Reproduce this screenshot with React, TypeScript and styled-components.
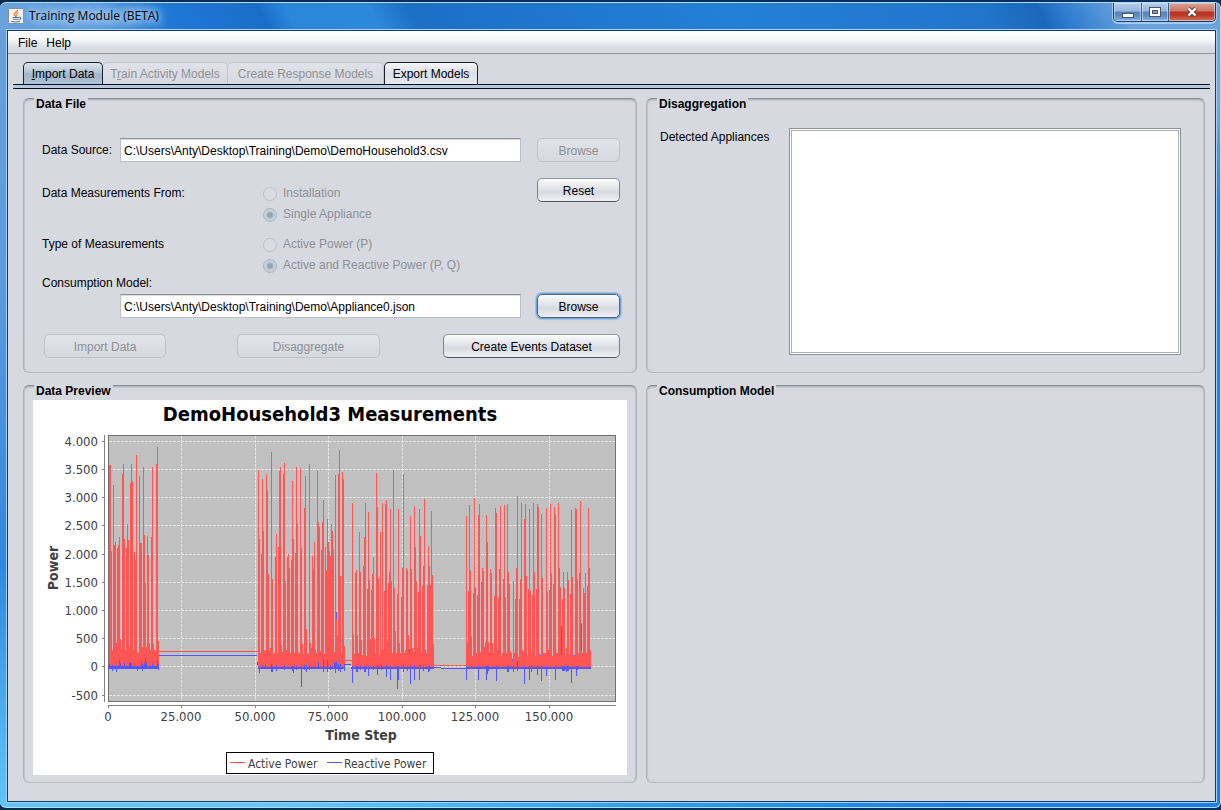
import React from "react";
import styled, { createGlobalStyle, css } from "styled-components";

const GlobalStyle = createGlobalStyle`
  *, *::before, *::after { box-sizing: border-box; }
  html, body { margin: 0; padding: 0; background: #04305f; }
  body, button, input, select {
    font-family: "Liberation Sans", Arial, sans-serif;
    font-size: 12px;
    line-height: 14px;
    color: #000;
  }
`;

const PANEL_BG = "#d6d9e0";
const MUTED = "#8e9095";

const Desktop = styled.div`
  min-height: 100vh;
  display: flex;
  padding: 2px 0 3px;
  background: linear-gradient(90deg, #0b2c4c, #04305f);
`;

const WindowFrame = styled.div`
  flex: 1;
  display: flex;
  flex-direction: column;
  padding: 0 4px 5px 7px;
  border: 1px solid #b5dcf8;
  border-left-width: 0;
  border-radius: 6px;
  background:
    linear-gradient(62deg, #6ba2dc 0, #5a9ae0 9%, #1f78d6 14%, #1a6ec8 22%, #2a86d8 24%, #2c88da 31%, #1b70c6 34%, #2380d4 60%, #2176cc 80%, #1a68bc 85%, #2f7cd0 87%, #6ba2dc 92%) top / 100% 28px no-repeat,
    linear-gradient(90deg, #5fc6f8 0, #5cc9fc 25%, #2fa3f2 50%, #1680e8 80%, #1680e8 100%) bottom / 100% 6px no-repeat,
    linear-gradient(180deg, #6ba0d8 0, #5b9bdc 35%, #2f88e0 70%, #5fc6f8 100%) left / 8px 100% no-repeat,
    linear-gradient(180deg, #6ba2dc 0, #7aa9e0 12%, #2b84e0 25%, #1680e8 100%) right / 6px 100% no-repeat;
`;

const TitleBar = styled.header`
  height: 27px;
  display: flex;
  align-items: flex-start;
  justify-content: space-between;
`;

const TitleGroup = styled.div`
  display: flex;
  align-items: center;
  gap: 5px;
  padding: 5px 0 0 1px;
`;

const AppIcon = styled.svg`
  width: 16px;
  height: 16px;
`;

const WindowTitle = styled.h1`
  margin: 0;
  font: 400 12px/16px "Open Sans", "Segoe UI", sans-serif;
  text-shadow: 0 0 8px #cfe4fa, 0 0 8px #cfe4fa, 0 0 14px #a9cdf2, 0 0 14px #a9cdf2;
`;

const WindowControls = styled.div`
  display: flex;
  height: 19px;
  border: 1px solid #1c3c66;
  border-top: 0;
  border-radius: 0 0 5px 5px;
  box-shadow: 0 1px 0 1px rgba(190, 220, 250, 0.7);
  overflow: hidden;
`;

const ControlButton = styled.button<{ $close?: boolean }>`
  width: ${(p) => (p.$close ? 47 : 27)}px;
  padding: 0;
  border: 0;
  border-left: 1px solid #39608e;
  display: flex;
  align-items: center;
  justify-content: center;
  box-shadow: inset 0 0 0 1px rgba(220, 235, 250, 0.55);
  background: ${(p) =>
    p.$close
      ? "linear-gradient(180deg, #dba195 0, #cb7464 45%, #b43423 50%, #bb3b27 70%, #d4765c 100%)"
      : "linear-gradient(180deg, #b4cde8 0, #95b6dc 45%, #5484b9 50%, #5c8dc2 70%, #86b4e0 100%)"};
  &:first-child { border-left: 0; }
`;

const ClientArea = styled.div`
  flex: 1;
  display: flex;
  flex-direction: column;
  border: 1px solid #16395f;
  outline: 1px solid #a8d0f4;
  background: ${PANEL_BG};
`;

const MenuBar = styled.nav`
  height: 23px;
  display: flex;
  align-items: center;
  gap: 9px;
  padding: 2px 10px 0;
  border-bottom: 1px solid #93979f;
  background: linear-gradient(180deg, #fff 0, #f6f7f8 40%, #d9dce2 75%, #d6d9e0 100%);
`;

const MenuButton = styled.button`
  padding: 0;
  border: 0;
  background: none;
`;

const TabStrip = styled.div`
  display: flex;
  margin: 8px 5px 0;
  padding-left: 10px;
`;

const TabRail = styled.div`
  height: 5px;
  margin: 0 5px;
  border: solid #0a0a20;
  border-width: 1px 0;
  background: #b9c9dd;
`;

const Tab = styled.button<{ $width: number }>`
  height: 23px;
  width: ${(p) => p.$width}px;
  margin-bottom: -1px;
  padding: 0;
  white-space: nowrap;
  border: 1px solid #1c2233;
  border-bottom-color: #0a0a20;
  border-radius: 5px 5px 0 0;
  background: linear-gradient(180deg, #f4f5f7 0, #dcdfe5 50%, #e6e9ee 100%);

  &[aria-selected="true"] {
    border-bottom-color: #a9bccf;
    background: linear-gradient(180deg, #dde5ec 0, #b8c8d6 40%, #a2b6ca 55%, #b0c4d8 100%);
  }
  &:disabled {
    color: ${MUTED};
    border-color: #c0c4cc;
    border-left-width: 0;
    border-bottom: 0;
    background: linear-gradient(180deg, #dfe2e8, #d6d9e0);
  }
`;

const Workspace = styled.main`
  flex: 1;
  display: grid;
  grid-template-columns: minmax(0, 614fr) minmax(0, 559fr);
  grid-template-rows: auto 1fr;
  gap: 12px 9px;
  padding: 9px 10px 18px 15px;
`;

const Panel = styled.section`
  display: flex;
  flex-direction: column;
  border: 1px solid #adb1b8;
  border-top-color: #8b8f97;
  border-bottom-color: #b6bac1;
  border-radius: 6px;
  box-shadow: inset 0 2px 2px -1px #a4a8b0, inset 1px 0 1px #c2c5cc, inset -1px 0 1px #c2c5cc;
`;

const PanelTitle = styled.h2`
  align-self: flex-start;
  margin: -2px 0 0 10px;
  padding: 0 2px;
  font-size: 12px;
  line-height: 14px;
  font-weight: 700;
  background: ${PANEL_BG};
`;

const Form = styled.form`
  display: flex;
  flex-direction: column;
  padding: 27px 16px 14px 18px;
`;

const FieldRow = styled.div`
  display: flex;
  align-items: center;
  gap: 16px;
`;

const FieldBox = styled.div`
  flex: 1;
  display: flex;
  align-items: center;
  padding-left: 78px;
`;

const FieldLabel = styled.label`
  width: 78px;
  margin-left: -78px;
  white-space: nowrap;
`;

const StackedLabel = styled.label`
  line-height: 14px;
  margin-bottom: 4px;
`;

const TextInput = styled.input`
  flex: 1;
  min-width: 0;
  height: 24px;
  padding: 1px 3px 0;
  border: 1px solid #bcbfc4;
  border-top-color: #8b8e93;
  outline: 0;
  background: #fff;
  box-shadow: inset 0 1px 0 #dadbdd;
`;

const PushButton = styled.button<{ $width: number; $active?: boolean }>`
  width: ${(p) => p.$width}px;
  height: 24px;
  padding: 1px 0 0;
  white-space: nowrap;
  border: 1px solid #7c8088;
  border-top-color: #94989f;
  border-bottom-color: #51555d;
  border-radius: 5px;
  background: linear-gradient(180deg, #fafbfb 0, #e3e5ea 40%, #d6d9df 60%, #eff1f6 100%);
  ${(p) =>
    p.$active &&
    css`
      border-color: #55657c;
      box-shadow: 0 0 0 1px #74a3d6, 0 0 1px 2px #9fc0e4;
    `}
  &:disabled {
    color: ${MUTED};
    border-color: #bec2c9;
    background: linear-gradient(180deg, #e0e3e8, #d5d8df);
  }
`;

const OptionsBlock = styled.div`
  display: flex;
  align-items: flex-start;
  justify-content: space-between;
  margin-top: 16px;
`;

const OptionGroups = styled.div`
  display: flex;
  flex-direction: column;
  gap: 9px;
  padding-top: 5px;
`;

const OptionGroup = styled.div`
  display: grid;
  grid-template-columns: 221px auto;
  grid-auto-rows: 21px;
  line-height: 21px;
`;

const GroupName = styled.span`
  grid-row: span 2;
`;

const RadioLabel = styled.label`
  display: flex;
  align-items: center;
  gap: 6px;
  color: ${MUTED};
`;

const Radio = styled.input`
  appearance: none;
  width: 14px;
  height: 14px;
  margin: 0;
  border: 1px solid #bcc0c8;
  border-radius: 50%;
  background: #d9dce2;
  &:checked {
    border-color: #adb6c3;
    background: radial-gradient(circle, #98a0ad 0 2px, #c6ced9 4px);
  }
`;

const ActionRow = styled.div`
  display: flex;
  justify-content: space-between;
  margin-top: 16px;
  padding-left: 2px;
`;

const ActionPair = styled.div`
  display: flex;
  gap: 71px;
`;

const ListRow = styled.div`
  flex: 1;
  display: flex;
  gap: 16px;
  padding: 17px 23px 17px 13px;
`;

const ListLabel = styled.label`
  width: 113px;
  padding-top: 2px;
  white-space: nowrap;
`;

const ListBox = styled.select`
  flex: 1;
  min-width: 0;
  height: 100%;
  padding: 0;
  border: 1px solid #8e9299;
  border-radius: 0;
  outline: 1px solid #adafb2;
  outline-offset: -3px;
  background: #fff;
`;

const ChartBox = styled.figure`
  margin: 2px 9px 7px;
  background: #fff;
`;

const ChartSvg = styled.svg`
  display: block;
  width: 100%;
  height: auto;
  font-family: "DejaVu Sans Condensed", "DejaVu Sans", Tahoma, sans-serif;
  font-size: 13px;
  fill: #404040;
`;

/* ---- chart data -------------------------------------------------- */

const ACTIVE = "#ff5555";
const REACTIVE = "#5555ff";

type Run = { start: number; tops: number[] };

/* One sample per pixel column; tops are thirds of a pixel below y = 30. */
const RUNS: Run[] = [
  {
    start: 76,
    tops: [105, 105, 363, 660, 165, 345, 336, 640, 354, 345, 321, 627, 657, 132, 102, 327, 660, 354, 282, 330, 650, 159, 102, 153, 660, 366, 390, 75, 665, 670, 138, 339, 339, 650, 111, 315, 457, 650, 318, 375, 640, 660, 321, 111, 642, 660, 660, 102, 51, 634],
  },
  {
    start: 225,
    tops: [120, 327, 670, 372, 147, 303, 660, 663, 132, 180, 432, 663, 655, 66, 447, 672, 669, 380, 312, 669, 351, 123, 111, 645, 667, 132, 99, 453, 660, 380, 372, 414, 669, 390, 153, 327, 669, 369, 111, 279, 667, 672, 114, 354, 642, 672, 234, 138, 597, 669, 672, 102, 639, 655, 378, 417, 336, 657, 669, 123, 276, 291, 663, 360, 276, 210, 672, 351, 420, 267, 336, 363, 378, 282, 303, 357, 666, 135, 567, 618, 132, 60, 438, 669, 126, 147, 648],
  },
  {
    start: 319,
    tops: [219, 612, 672, 429, 420, 615, 669, 306, 426, 630, 675, 408, 321, 219, 678, 477, 246, 450, 627, 480, 432, 381, 624, 669, 129, 231, 444, 675, 306, 660, 219, 660, 483, 222, 210, 633, 459, 426, 237, 453, 669, 120, 474, 603, 669, 492, 237, 639, 669, 501, 414, 132, 669, 660, 414, 420, 615, 657, 258, 417, 654, 666, 228, 351, 453, 654, 486, 237, 318, 666, 468, 408, 207, 657, 669, 465, 348, 408, 465, 243, 435, 642],
  },
  {
    start: 433,
    tops: [258, 639, 483, 225, 420, 618, 678, 489, 204, 471, 669, 495, 255, 222, 667, 456, 414, 423, 651, 636, 255, 336, 636, 669, 417, 429, 639, 669, 498, 234, 249, 660, 501, 417, 228, 678, 669, 447, 225, 501, 669, 222, 426, 462, 663, 669, 687, 453, 669, 507, 414, 198, 681, 507, 447, 219, 660, 669, 267, 222, 438, 678, 477, 237, 483, 666, 495, 219, 426, 678, 477, 222, 231, 669, 675, 252, 444, 669, 669, 669, 234, 486, 660, 480, 222, 429, 678, 462, 231, 252, 669, 669, 219, 414, 471, 675, 507, 426, 474, 678, 654, 426, 450, 672, 492, 240, 441, 675, 675, 234, 237, 447, 669, 429, 213, 660, 669, 474, 489, 429, 669, 468, 234, 414, 660],
  },
];

/* Reactive power excursions: x, top, bottom. */
const SPIKES: [number, number, number][] = [
  [76, 264, 269], [79, 265, 271], [83, 265, 272], [86, 260, 269], [87, 263, 269], [91, 263, 269], [96, 262, 269],
  [97, 262, 269], [98, 263, 269], [104, 266, 271], [108, 261, 268], [109, 264, 271], [111, 263, 269], [112, 258, 268],
  [113, 263, 269], [119, 263, 269], [124, 261, 269], [125, 264, 270],
  [224, 262, 265], [226, 266, 273], [229, 265, 269], [232, 265, 269], [238, 264, 272], [239, 266, 272], [243, 265, 271],
  [251, 265, 270], [260, 266, 273], [259, 266, 271], [263, 265, 270], [268, 266, 287], [271, 265, 270], [273, 265, 272],
  [276, 265, 270], [285, 262, 269], [290, 259, 272], [294, 260, 272], [297, 265, 270], [301, 262, 268], [302, 263, 273],
  [303, 261, 269], [305, 264, 271], [307, 264, 272], [311, 265, 271], [303, 212, 219],
  [319, 266, 283], [323, 266, 272], [324, 266, 272], [327, 265, 270], [331, 266, 272], [332, 266, 272], [335, 266, 276],
  [340, 266, 270], [344, 265, 275], [348, 265, 270], [353, 265, 277], [357, 266, 280], [364, 266, 289], [365, 266, 280],
  [370, 265, 272], [374, 266, 271], [377, 266, 284], [381, 265, 280], [386, 265, 280], [390, 266, 271], [395, 266, 272],
  [396, 266, 271], [376, 249, 253],
  [433, 266, 280], [445, 266, 280], [453, 266, 280], [454, 266, 274], [455, 266, 271], [463, 266, 281], [474, 266, 272],
  [475, 266, 272], [480, 266, 272], [484, 261, 271], [479, 259, 261], [491, 266, 284], [496, 266, 280], [498, 266, 272],
  [504, 266, 275], [508, 266, 281], [513, 266, 276], [522, 266, 280], [529, 266, 271], [530, 266, 271], [531, 266, 271],
  [533, 266, 272], [534, 266, 271], [535, 266, 271], [538, 266, 283], [543, 266, 276], [544, 266, 270], [528, 226, 255],
  [548, 223, 250], [456, 253, 255], [507, 255, 256], [541, 255, 256],
];

const columnPath = ({ start, tops }: Run) =>
  tops.map((t, i) => `M${start + i} ${Math.round(30 + t / 3)}h1V268h-1z`).join("");

const spikePath = SPIKES.map(([x, top, bottom]) => `M${x} ${top}h1V${bottom}h-1z`).join("");

const Y_TICKS = [
  { y: 41, label: "4.000" },
  { y: 69, label: "3.500" },
  { y: 97, label: "3.000" },
  { y: 125, label: "2.500" },
  { y: 154, label: "2.000" },
  { y: 182, label: "1.500" },
  { y: 210, label: "1.000" },
  { y: 238, label: "500" },
  { y: 266, label: "0" },
  { y: 295, label: "-500" },
];

const X_TICKS = [
  { x: 75, label: "0" },
  { x: 148, label: "25.000" },
  { x: 222, label: "50.000" },
  { x: 295, label: "75.000" },
  { x: 369, label: "100.000" },
  { x: 442, label: "125.000" },
  { x: 516, label: "150.000" },
];

function MeasurementsChart() {
  return (
    <ChartSvg viewBox="0 0 594 375" role="img" aria-label="DemoHousehold3 Measurements">
      <text x="297" y="21" textAnchor="middle" fontSize="20" fontWeight="700" fill="#000">
        DemoHousehold3 Measurements
      </text>

      <g shapeRendering="crispEdges">
        <rect x="75" y="35" width="508" height="267" fill="#c0c0c0" />
        <g stroke="#e4e4e4" strokeDasharray="3 1">
          {Y_TICKS.map((t) => (
            <line key={t.y} x1="76" x2="582" y1={t.y + 0.5} y2={t.y + 0.5} />
          ))}
          {X_TICKS.slice(1).map((t) => (
            <line key={t.x} x1={t.x + 0.5} x2={t.x + 0.5} y1="36" y2="301" />
          ))}
        </g>
        <rect x="75.5" y="35.5" width="507" height="266" fill="none" stroke="#707070" />
        <g stroke="#808080">
          <path d="M71.5 35V302M75 305.5H583" />
          {Y_TICKS.map((t) => (
            <path key={t.y} d={`M69 ${t.y + 0.5}h2`} />
          ))}
          {X_TICKS.map((t) => (
            <path key={t.x} d={`M${t.x + 0.5} 306v2`} />
          ))}
        </g>

        <g fill={ACTIVE}>
          {RUNS.map((run) => (
            <path key={run.start} d={columnPath(run)} />
          ))}
          <path d="M126 251h99v1h-99zM311 260h9v1h-9zM401 265h32v1h-32z" />
        </g>
        <g fill={REACTIVE}>
          <path d="M75 266h51v3h-51zM126 255h98v1h-98zM225 267h87v2h-87zM311 264h7v1h-7zM318 267h83v2h-83zM401 267h7v1h-7zM408 268h25v1h-25zM433 267h125v2h-125z" />
          <path d={spikePath} />
        </g>
      </g>

      <g textAnchor="end">
        {Y_TICKS.map((t) => (
          <text key={t.y} x="65" y={t.y + 5}>
            {t.label}
          </text>
        ))}
      </g>
      <g textAnchor="middle">
        {X_TICKS.map((t) => (
          <text key={t.x} x={t.x} y="321">
            {t.label}
          </text>
        ))}
        <text x="328" y="340" fontSize="14" fontWeight="700">
          Time Step
        </text>
        <text transform="translate(25 168) rotate(-90)" fontSize="14" fontWeight="700">
          Power
        </text>
      </g>

      <rect x="193.5" y="352.5" width="207" height="21" fill="#fff" stroke="#000" shapeRendering="crispEdges" />
      <path d="M197 362.5h15" stroke={ACTIVE} shapeRendering="crispEdges" />
      <text x="215" y="368" fontSize="12">Active Power</text>
      <path d="M294 362.5h15" stroke={REACTIVE} shapeRendering="crispEdges" />
      <text x="311" y="368" fontSize="12">Reactive Power</text>
    </ChartSvg>
  );
}

/* ---- window ------------------------------------------------------ */

function JavaIcon() {
  return (
    <AppIcon viewBox="0 0 16 16" aria-hidden="true">
      <rect x="0.5" y="0.5" width="15" height="15" rx="1" fill="#f2f2f0" stroke="#8a8f96" />
      <path d="M9.4 2C10 4 6 4.800 6.300 6.500C6.500 7.500 7.600 8 7.600 9" fill="none" stroke="#e8761e" strokeWidth="1.300" />
      <path d="M10.600 4.600C9 5.300 8.200 6 8.800 7C9.200 7.700 9 8.300 8.600 8.800" fill="none" stroke="#e8761e" />
      <path d="M4.500 9.500h6.500M5 11.300h5.500M3.200 13.300c3 .9 6.500.8 9-.2M11 9.300c2.600-.3 2.200 2 .2 2.200" fill="none" stroke="#4f7ba3" strokeWidth="1.100" />
    </AppIcon>
  );
}

export default function App() {
  return (
    <>
      <GlobalStyle />
      <Desktop>
        <WindowFrame>
          <TitleBar>
            <TitleGroup>
              <JavaIcon />
              <WindowTitle>Training Module (BETA)</WindowTitle>
            </TitleGroup>
            <WindowControls>
              <ControlButton aria-label="Minimize">
                <svg width="12" height="14" viewBox="0 0 12 14">
                  <rect x="0.5" y="8.5" width="11" height="4" fill="#fff" stroke="#4a5568" />
                </svg>
              </ControlButton>
              <ControlButton aria-label="Maximize">
                <svg width="12" height="12" viewBox="0 0 12 12">
                  <rect x="0.5" y="1.5" width="11" height="9" fill="#fff" stroke="#4a5568" />
                  <rect x="3.5" y="4.5" width="5" height="3" fill="#6c9bd0" stroke="#4a5568" />
                </svg>
              </ControlButton>
              <ControlButton $close aria-label="Close">
                <svg width="12" height="12" viewBox="0 0 12 12">
                  <path d="M2.500 2.500l7 7M9.500 2.500l-7 7" stroke="#5a3c40" strokeWidth="4.400" />
                  <path d="M2.500 2.500l7 7M9.500 2.500l-7 7" stroke="#fff" strokeWidth="2.400" />
                </svg>
              </ControlButton>
            </WindowControls>
          </TitleBar>

          <ClientArea>
            <MenuBar>
              <MenuButton>File</MenuButton>
              <MenuButton>Help</MenuButton>
            </MenuBar>

            <TabStrip role="tablist">
              <Tab role="tab" $width={80} aria-selected="true">
                <u>I</u>mport Data
              </Tab>
              <Tab role="tab" $width={125} aria-selected="false" disabled>
                T<u>r</u>ain Activity Models
              </Tab>
              <Tab role="tab" $width={156} aria-selected="false" disabled>
                Create Response Models
              </Tab>
              <Tab role="tab" $width={94} aria-selected="false">
                Export Models
              </Tab>
            </TabStrip>
            <TabRail />

            <Workspace>
              <Panel>
                <PanelTitle>Data File</PanelTitle>
                <Form onSubmit={(e) => e.preventDefault()}>
                  <FieldRow>
                    <FieldBox>
                      <FieldLabel htmlFor="source">Data Source:</FieldLabel>
                      <TextInput id="source" defaultValue={"C:\\Users\\Anty\\Desktop\\Training\\Demo\\DemoHousehold3.csv"} />
                    </FieldBox>
                    <PushButton type="button" $width={83} disabled>
                      Browse
                    </PushButton>
                  </FieldRow>

                  <OptionsBlock>
                    <OptionGroups>
                      <OptionGroup role="radiogroup" aria-labelledby="from">
                        <GroupName id="from">Data Measurements From:</GroupName>
                        <RadioLabel>
                          <Radio type="radio" name="from" disabled />
                          Installation
                        </RadioLabel>
                        <RadioLabel>
                          <Radio type="radio" name="from" disabled defaultChecked />
                          Single Appliance
                        </RadioLabel>
                      </OptionGroup>
                      <OptionGroup role="radiogroup" aria-labelledby="kind">
                        <GroupName id="kind">Type of Measurements</GroupName>
                        <RadioLabel>
                          <Radio type="radio" name="kind" disabled />
                          Active Power (P)
                        </RadioLabel>
                        <RadioLabel>
                          <Radio type="radio" name="kind" disabled defaultChecked />
                          Active and Reactive Power (P, Q)
                        </RadioLabel>
                      </OptionGroup>
                    </OptionGroups>
                    <PushButton type="button" $width={83}>
                      Reset
                    </PushButton>
                  </OptionsBlock>

                  <StackedLabel htmlFor="model">Consumption Model:</StackedLabel>
                  <FieldRow>
                    <FieldBox>
                      <TextInput id="model" defaultValue={"C:\\Users\\Anty\\Desktop\\Training\\Demo\\Appliance0.json"} />
                    </FieldBox>
                    <PushButton type="button" $width={83} $active>
                      Browse
                    </PushButton>
                  </FieldRow>

                  <ActionRow>
                    <ActionPair>
                      <PushButton type="button" $width={122} disabled>
                        Import Data
                      </PushButton>
                      <PushButton type="button" $width={143} disabled>
                        Disaggregate
                      </PushButton>
                    </ActionPair>
                    <PushButton type="button" $width={177}>
                      Create Events Dataset
                    </PushButton>
                  </ActionRow>
                </Form>
              </Panel>

              <Panel>
                <PanelTitle>Disaggregation</PanelTitle>
                <ListRow>
                  <ListLabel htmlFor="appliances">Detected Appliances</ListLabel>
                  <ListBox id="appliances" multiple />
                </ListRow>
              </Panel>

              <Panel>
                <PanelTitle>Data Preview</PanelTitle>
                <ChartBox>
                  <MeasurementsChart />
                </ChartBox>
              </Panel>

              <Panel>
                <PanelTitle>Consumption Model</PanelTitle>
              </Panel>
            </Workspace>
          </ClientArea>
        </WindowFrame>
      </Desktop>
    </>
  );
}
